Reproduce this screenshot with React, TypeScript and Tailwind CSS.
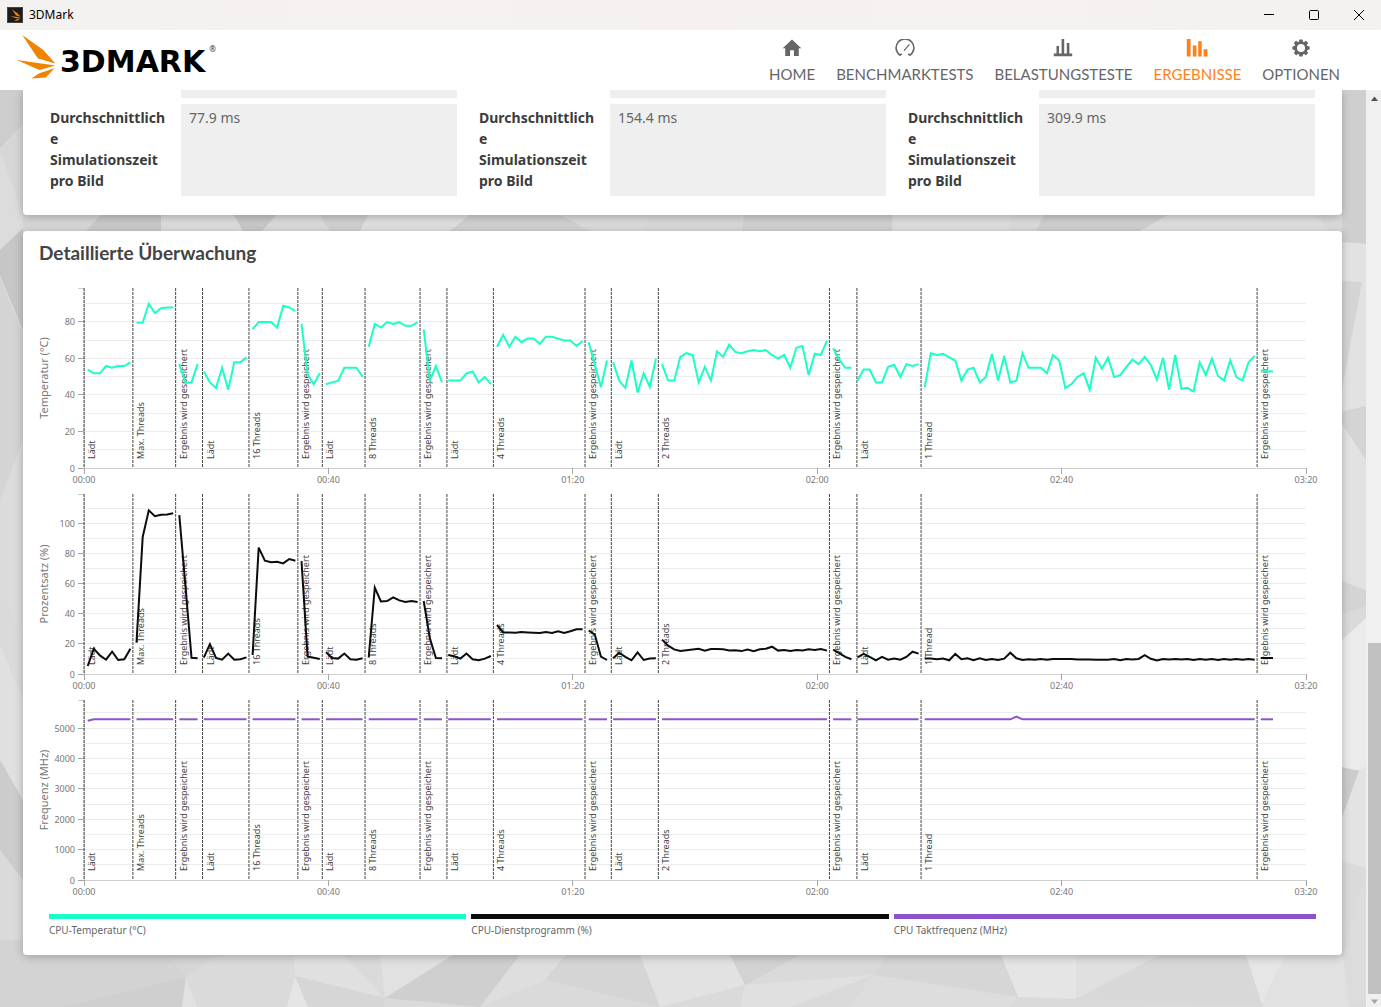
import type { ReactNode } from 'react';
import { clsx } from 'clsx';

type Metric = 'temp' | 'load' | 'clock';

interface Phase {
  label: string;
  start: number;
  // time of the first sample, one sample per second after that
  first: number;
  temp: number[];
  load: number[];
}

interface ChartConfig {
  metric: Metric;
  title: string;
  color: string;
  max: number;
  gridStep: number;
  tickStep: number;
}

const SAVING = 'Ergebnis wird gespeichert';
const LOADING = 'Lädt';

const PHASES: Phase[] = [
  {
    label: LOADING,
    start: 0,
    first: 0.6,
    temp: [54, 52, 52, 56, 55, 56, 56, 58],
    load: [5.5, 17, 12.5, 9.7, 15, 9.5, 10, 17],
  },
  {
    label: 'Max. Threads',
    start: 8,
    first: 8.6,
    temp: [79.6, 79.8, 90, 85, 87.6, 88, 88],
    load: [21, 91, 108.6, 104.8, 105.8, 106, 106.8],
  },
  { label: SAVING, start: 15, first: 15.6, temp: [57, 47, 47, 57], load: [105.5, 59, 11, 10.7] },
  {
    label: LOADING,
    start: 19.4,
    first: 19.6,
    temp: [53, 47, 44, 55, 43, 58, 58, 60.7],
    load: [11, 20, 10.8, 9.7, 13.7, 9.7, 10, 11.2],
  },
  {
    label: '16 Threads',
    start: 27,
    first: 27.6,
    temp: [76.2, 80, 80, 80, 77, 89, 88, 86],
    load: [12.8, 84, 75.3, 74.2, 74.6, 73.5, 76.4, 75.3],
  },
  { label: SAVING, start: 35, first: 35.6, temp: [79, 51.5, 46, 52], load: [75, 11.7, 11, 10.2] },
  {
    label: LOADING,
    start: 39,
    first: 39.6,
    temp: [46, 47, 48, 55, 55, 55, 50],
    load: [14.6, 10.8, 10.4, 13.7, 10, 9.7, 10.6],
  },
  {
    label: '8 Threads',
    start: 46,
    first: 46.6,
    temp: [66.5, 79, 77, 80, 79, 80, 78, 78, 80],
    load: [11.3, 57.4, 48.3, 48.6, 51, 49, 48, 48.6, 48],
  },
  { label: SAVING, start: 55, first: 55.6, temp: [76, 48, 56, 47], load: [48.6, 24, 10.8, 10.6] },
  {
    label: LOADING,
    start: 59.4,
    first: 59.6,
    temp: [48, 48, 48, 52, 53, 47, 50, 46],
    load: [12.8, 12, 10.4, 13.7, 10, 9.3, 10.4, 12.1],
  },
  {
    label: '4 Threads',
    start: 67,
    first: 67.6,
    temp: [66.5, 73, 66.5, 72, 69, 71, 71, 68, 72, 72, 71, 70, 70, 67, 69.6],
    load: [32.7, 27.8, 27.8, 27.6, 28, 27.8, 27.6, 27.4, 28, 27.4, 28.5, 27.4, 28.5, 29.8, 29.8],
  },
  { label: SAVING, start: 82, first: 82.6, temp: [69, 56.5, 44.5, 59], load: [29, 26.3, 11.7, 9.5] },
  {
    label: LOADING,
    start: 86.3,
    first: 86.6,
    temp: [58, 48, 44, 59, 41.5, 52, 44.5, 60],
    load: [10.6, 14.3, 11.5, 9.3, 14.6, 9.5, 10.4, 10.6],
  },
  {
    label: '2 Threads',
    start: 94,
    first: 94.6,
    temp: [
      57, 48, 48, 61, 63, 62, 47, 55.5, 48, 64, 61, 67.7, 63.7, 63, 64, 64.7, 64, 64.7, 62, 60, 62, 55, 66, 67,
      51, 62.7, 62, 69.8,
    ],
    load: [
      23, 19, 16.5, 15.5, 16, 16.5, 17, 15.7, 16.8, 16.8, 16.6, 15.7, 16, 15.4, 16.4, 15.4, 16.6, 17, 18.3,
      15.7, 16.2, 15.4, 16.2, 15.7, 16.6, 16.2, 16.8, 15.7,
    ],
  },
  { label: SAVING, start: 122, first: 122.6, temp: [65.7, 59.5, 55, 55], load: [16.4, 14, 11.5, 10] },
  {
    label: LOADING,
    start: 126.5,
    first: 126.6,
    temp: [48, 54, 54, 47, 47, 55.6, 56.7, 50, 57, 56, 57],
    load: [11.2, 13.5, 11.5, 9.3, 11.5, 9.7, 10.4, 9.7, 11.5, 15, 13.7],
  },
  {
    label: '1 Thread',
    start: 137,
    first: 137.6,
    temp: [
      44.3, 63, 62, 62.7, 60.7, 59, 48, 54, 55, 47, 50, 62.5, 48, 61.5, 47, 48, 63, 55, 55, 55, 52, 62, 59, 44,
      46, 50, 52, 43, 60.5, 54.5, 60.5, 50, 51, 55.5, 59.5, 57, 61, 56.5, 48.5, 60.5, 43, 62, 43.5, 44, 42, 58,
      51, 60, 50.5, 48, 59, 50, 48, 58, 61.5,
    ],
    load: [
      10.5, 10.4, 10, 10.4, 9.3, 13.5, 10, 10.6, 9.3, 10.6, 9.5, 10.2, 9.5, 10.4, 14.3, 10.6, 9.5, 10, 9.7,
      10.2, 9.7, 10.1, 10.2, 10.1, 10.2, 9.9, 9.8, 9.8, 9.7, 9.7, 9.7, 10.1, 9.3, 10.1, 9.9, 10.2, 12.7, 10.3,
      9.2, 10.1, 9.8, 10.1, 9.8, 10.2, 9.4, 10.2, 9.7, 10.1, 9.5, 10.2, 9.6, 10.1, 9.6, 10.1, 9.6,
    ],
  },
  { label: SAVING, start: 192, first: 192.6, temp: [53.5, 53, 53], load: [10.8, 10.8, 10.8] },
];

const CHARTS: ChartConfig[] = [
  { metric: 'temp', title: 'Temperatur (°C)', color: '#19ffc6', max: 98.5, gridStep: 10, tickStep: 20 },
  { metric: 'load', title: 'Prozentsatz (%)', color: '#0c0c0c', max: 119.3, gridStep: 10, tickStep: 20 },
  { metric: 'clock', title: 'Frequenz (MHz)', color: '#8f52cc', max: 5925, gridStep: 500, tickStep: 1000 },
];

const LEGEND = [
  { label: 'CPU-Temperatur (°C)', bar: 'bg-[#19ffc6]' },
  { label: 'CPU-Dienstprogramm (%)', bar: 'bg-[#0c0c0c]' },
  { label: 'CPU Taktfrequenz (MHz)', bar: 'bg-[#8f52cc]' },
];

const RESULTS = ['77.9 ms', '154.4 ms', '309.9 ms'];

// plot area inside each chart's view box
const LEFT = 49;
const TOP = 6;
const PLOT_W = 1222;
const PLOT_H = 180;
const DURATION = 200;

const xAt = (t: number) => LEFT + (t / DURATION) * PLOT_W;

function valuesOf(phase: Phase, index: number, metric: Metric) {
  if (metric !== 'clock') return phase[metric];
  return phase.temp.map((_, i) => {
    if (index === 0 && i === 0) return 5250;
    return phase.label === '1 Thread' && i === 15 ? 5390 : 5300;
  });
}

function formatTime(t: number) {
  return `${String(Math.floor(t / 60)).padStart(2, '0')}:${String(t % 60).padStart(2, '0')}`;
}

function MonitoringChart({ metric, title, color, max, gridStep, tickStep }: ChartConfig) {
  const bottom = TOP + PLOT_H;
  const yAt = (v: number) => bottom - (v / max) * PLOT_H;
  const crisp = (v: number) => Math.floor(yAt(v)) + 0.5;

  const grid: number[] = [];
  for (let v = gridStep; v < max; v += gridStep) grid.push(v);
  const ticks: number[] = [];
  for (let v = 0; v < max; v += tickStep) ticks.push(v);

  return (
    <svg viewBox="0 0 1295 206" className="block h-auto w-full" role="img" aria-label={title}>
      {grid.map((v) => (
        <line key={v} x1={LEFT} x2={LEFT + PLOT_W} y1={crisp(v)} y2={crisp(v)} stroke="#ededed" />
      ))}

      {/* Axes */}
      <path
        d={`M${LEFT - 6} ${TOP + 0.5}H${LEFT + 0.5}V${bottom + 0.5}H${LEFT + PLOT_W + 1}`}
        fill="none"
        stroke="#cfcfcf"
      />
      {ticks.map((v) => (
        <g key={v}>
          <line x1={LEFT - 6} x2={LEFT} y1={crisp(v)} y2={crisp(v)} stroke="#a5a5a5" />
          <text x={LEFT - 9} y={crisp(v) + 3} textAnchor="end" className="fill-[#777] text-[9px]">
            {v}
          </text>
        </g>
      ))}
      {[0, 40, 80, 120, 160, 200].map((t) => (
        <g key={t}>
          <line
            x1={Math.floor(xAt(t)) + 0.5}
            x2={Math.floor(xAt(t)) + 0.5}
            y1={bottom}
            y2={bottom + 6}
            stroke="#a5a5a5"
          />
          <text x={xAt(t)} y={bottom + 15} textAnchor="middle" className="fill-[#777] text-[9px]">
            {formatTime(t)}
          </text>
        </g>
      ))}
      <text
        transform={`translate(${LEFT - 36} ${TOP + PLOT_H / 2}) rotate(-90)`}
        textAnchor="middle"
        className="fill-[#777] text-[11px]"
      >
        {title}
      </text>

      {/* Phase markers */}
      {PHASES.map((p) => (
        <g key={p.start}>
          <line
            x1={xAt(p.start)}
            x2={xAt(p.start)}
            y1={TOP}
            y2={bottom}
            stroke="#444"
            strokeDasharray="3 1"
          />
          <text
            transform={`translate(${xAt(p.start) + 11} ${bottom - 9}) rotate(-90)`}
            className="fill-[#444] text-[9px]"
          >
            {p.label}
          </text>
        </g>
      ))}

      {PHASES.map((p, index) => (
        <polyline
          key={p.start}
          points={valuesOf(p, index, metric)
            .map((v, i) => `${xAt(p.first + i).toFixed(1)},${(yAt(v) + 0.3).toFixed(1)}`)
            .join(' ')}
          fill="none"
          stroke={color}
          strokeWidth="2"
        />
      ))}
    </svg>
  );
}

function HomeIcon() {
  return (
    <svg viewBox="0 0 20 18" className="h-[18px] w-5" fill="currentColor">
      <path d="M10 .5 19.3 9.3H16.8V17H11.9V11.2H8.1V17H3.2V9.3H.7z" />
    </svg>
  );
}

function GaugeIcon() {
  return (
    <svg viewBox="0 0 20 18" className="h-[18px] w-5" fill="none" stroke="currentColor">
      <path d="M6.8 14.8 5 16.2A8.9 8.9 0 1 1 15 16.2L13.2 14.8" strokeWidth="1.6" />
      <path d="M9 11.6 14.4 5.4" strokeWidth="1.3" />
    </svg>
  );
}

function StressIcon() {
  return (
    <svg viewBox="0 0 20 18" className="h-[18px] w-5" fill="currentColor">
      <path d="M.8 14.4H19.2V17.2H.8zM3.5 7H6V14.4H3.5zM8.6 0H11.2V14.4H8.6zM13.8 4H16.4V14.4H13.8z" />
    </svg>
  );
}

function ResultsIcon() {
  return (
    <svg viewBox="0 0 22 18" className="h-[18px] w-[22px]" fill="currentColor">
      <path d="M.8 0H4.6V17.4H.8zM6.8 6.4H10.4V17.4H6.8zM12.2 2.3H15.7V17.4H12.2zM17.6 10.2H21.4V17.4H17.6z" />
    </svg>
  );
}

function GearIcon() {
  return (
    <svg viewBox="-9 -9 18 18" className="size-[18px]">
      <g fill="currentColor">
        {[0, 45, 90, 135, 180, 225, 270, 315].map((a) => (
          <path key={a} d="M-2.2-5.5-1.5-8.6H1.5L2.2-5.5z" transform={`rotate(${a})`} />
        ))}
      </g>
      <circle r="5.3" fill="none" stroke="currentColor" strokeWidth="2.6" />
    </svg>
  );
}

const NAV: { label: string; icon: ReactNode; active?: boolean }[] = [
  { label: 'HOME', icon: <HomeIcon /> },
  { label: 'BENCHMARKTESTS', icon: <GaugeIcon /> },
  { label: 'BELASTUNGSTESTE', icon: <StressIcon /> },
  { label: 'ERGEBNISSE', icon: <ResultsIcon />, active: true },
  { label: 'OPTIONEN', icon: <GearIcon /> },
];

function LogoMark({ className }: { className: string }) {
  return (
    <svg viewBox="0 0 40 45" className={className} fill="#f08300">
      <path d="M6.2 1 27.3 16 39.3 29.4 22 24.4z" />
      <path d="M.6 26 39.3 31.6 23.6 36z" />
      <path d="M38.6 34.2 29.8 43.4 15.3 44.6 23.4 39.2z" />
    </svg>
  );
}

function TitleBar() {
  return (
    <div className="flex h-[30px] shrink-0 items-center bg-linear-to-r from-[#f3f2f0] via-[#f6f1f0] to-[#f3f2f0] pl-[7px]">
      <span className="flex size-4 items-center justify-center border border-[#444] bg-[#1c1c1c]">
        <LogoMark className="h-3 w-[11px]" />
      </span>
      <span className="ml-1.5 text-xs text-black">3DMark</span>
      <div className="ml-auto flex h-full text-black">
        <button aria-label="Minimieren" className="flex w-[45px] items-center justify-center">
          <svg viewBox="0 0 10 10" className="size-2.5" stroke="currentColor">
            <path d="M0 4.5H10" />
          </svg>
        </button>
        <button aria-label="Maximieren" className="flex w-[46px] items-center justify-center">
          <svg viewBox="0 0 10 10" className="size-2.5" stroke="currentColor" fill="none">
            <rect x=".5" y=".5" width="9" height="9" rx="1" />
          </svg>
        </button>
        <button aria-label="Schließen" className="flex w-11 items-center justify-center">
          <svg viewBox="0 0 10 10" className="size-2.5" stroke="currentColor">
            <path d="M0 0 10 10M10 0 0 10" />
          </svg>
        </button>
      </div>
    </div>
  );
}

function Header() {
  return (
    <header className="flex h-[60px] shrink-0 items-start justify-between bg-white pt-1 pr-[41px] pl-4">
      <a href="#home" className="flex items-start gap-1 text-black" aria-label="3DMark">
        <LogoMark className="h-[45px] w-10" />
        <span className="mt-2.5 font-['DejaVu_Sans'] text-[30px] leading-9 font-bold">3DMARK</span>
        <span className="mt-2.5 text-[8px] leading-[10px] text-[#333]">®</span>
      </a>
      <nav className="flex gap-[21px] pt-[5px] font-[Lato] text-[15px]">
        {NAV.map((item) => (
          <a
            key={item.label}
            href="#"
            className={clsx(
              'flex flex-col items-center gap-[7px] leading-5',
              item.active ? 'text-[#ff7f1a]' : 'text-[#666]'
            )}
          >
            {item.icon}
            {item.label}
          </a>
        ))}
      </nav>
    </header>
  );
}

function Backdrop() {
  return (
    <svg
      viewBox="0 90 1366 917"
      preserveAspectRatio="none"
      className="absolute inset-0 h-full w-full"
      aria-hidden="true"
    >
      <path d="M0 90H1366V1007H0z" fill="#dadada" />
      {/* left edge */}
      <path d="M0 90H23V215L0 230z" fill="#cdcdcd" />
      <path d="M23 124V240L0 236V148z" fill="#d6d6d6" />
      <path d="M0 150 23 215V300L0 252z" fill="#dcdcdc" />
      <path d="M0 250 23 228V330L0 275z" fill="#c6c6c6" />
      <path d="M0 278 23 335V445L0 500z" fill="#d4d4d4" />
      <path d="M0 500 23 440V640L0 590z" fill="#dbdbdb" />
      <path d="M0 645 23 700V830L0 760z" fill="#e0e0e0" />
      <path d="M0 760 23 800V880L0 850z" fill="#cccccc" />
      {/* band between the cards */}
      <path d="M23 205H82L101 215 86 231H23z" fill="#d6d6d6" />
      <path d="M101 215H161V231H86z" fill="#c9c9c9" />
      <path d="M161 215H234L243 231H161z" fill="#dcdcdc" />
      <path d="M234 215H276L262 231H243z" fill="#c8c8c8" />
      <path d="M320 215H368L360 231H330z" fill="#d0d0d0" />
      <path d="M368 215H470L450 231H360z" fill="#dfdfdf" />
      <path d="M470 215H560L590 231H450z" fill="#d0d0d0" />
      <path d="M650 215H740L744 231H640z" fill="#d8d8d8" />
      <path d="M744 215H893L892 231H742z" fill="#d0d0d0" />
      <path d="M893 215H1012L1009 231H892z" fill="#dddddd" />
      <path d="M1044 215H1168L1140 231H1036z" fill="#cfcfcf" />
      <path d="M1168 215H1315L1330 231H1140z" fill="#dfdfdf" />
      {/* right edge */}
      <path d="M1342 90H1366V244L1342 242z" fill="#cfcfcf" />
      <path d="M1342 242 1366 244V282H1342z" fill="#e2e2e2" />
      <path d="M1342 281 1362 282 1342 390z" fill="#d4d4d4" />
      <path d="M1362 282H1366V406L1342 412V390z" fill="#e2e2e2" />
      <path d="M1342 412 1366 406V460L1342 424z" fill="#d4d4d4" />
      <path d="M1342 424 1366 460V590L1342 581z" fill="#e2e2e2" />
      <path d="M1342 581 1366 591V606L1342 614z" fill="#d4d4d4" />
      <path d="M1342 640 1366 618V770H1342z" fill="#ebebeb" />
      <path d="M1342 767 1359 771 1342 818z" fill="#cccccc" />
      <path d="M1359 771 1366 766V868L1342 861V818z" fill="#e3e3e3" />
      {/* bottom strip */}
      <path d="M0 940H168L186 977 60 1007H0z" fill="#d3d3d3" />
      <path d="M186 977 60 1007H182z" fill="#cfcfcf" />
      <path d="M168 955H220L186 977z" fill="#d6d6d6" />
      <path d="M186 977 182 1007H197z" fill="#e1e1e1" />
      <path d="M186 977 220 955H294L295 976z" fill="#dadada" />
      <path d="M294 955H343L385 998 295 976z" fill="#e0e0e0" />
      <path d="M343 955H380L385 998z" fill="#dadada" />
      <path d="M380 955H453L385 998z" fill="#e1e1e1" />
      <path d="M295 976 287 1007H308z" fill="#e5e5e5" />
      <path d="M295 976 385 998 384 1007H308z" fill="#d6d6d6" />
      <path d="M453 955H520L480 1007 385 998z" fill="#cfcfcf" />
      <path d="M520 955H566L545 980 480 1007z" fill="#dedede" />
      <path d="M566 955H640L660 1007 545 980z" fill="#d5d5d5" />
      <path d="M640 955H730L745 985 660 1007z" fill="#e2e2e2" />
      <path d="M730 955H800L745 985z" fill="#d2d2d2" />
      <path d="M745 985 873 975 790 1007H740z" fill="#e0e0e0" />
      <path d="M873 975 888 955H1001L1018 997z" fill="#d6d6d6" />
      <path d="M873 975 1018 997 1010 1007H850z" fill="#dddddd" />
      <path d="M1001 955H1076V999L1018 997z" fill="#e5e5e5" />
      <path d="M1076 955H1160L1076 999z" fill="#e0e0e0" />
      <path d="M1160 955H1246L1262 1005 1076 999z" fill="#d8d8d8" />
      <path d="M1246 955H1285L1262 1005z" fill="#e6e6e6" />
      <path d="M1285 955H1343L1349 1007H1262z" fill="#e1e1e1" />
      <path d="M1343 955 1366 868V1000L1349 1007z" fill="#dcdcdc" />
    </svg>
  );
}

function ResultsCard() {
  return (
    <section className="rounded-b bg-white px-[27px] pb-[19px] shadow-[0_2px_8px_rgba(0,0,0,0.25)]">
      <dl className="grid grid-cols-3 gap-x-[22px]">
        {RESULTS.map((value) => (
          <div key={value} className="grid grid-cols-[117px_1fr] gap-x-3.5 gap-y-1.5 text-sm leading-[21px]">
            <div className="col-start-2 h-2 bg-[#efefef]" />
            <dt className="col-start-1 pt-[3px] pb-[5px] font-bold wrap-anywhere text-[#3c3c3c]">
              Durchschnittliche Simulationszeit pro Bild
            </dt>
            <dd className="bg-[#efefef] px-2 pt-[3px] pb-[5px] text-[#666]">{value}</dd>
          </div>
        ))}
      </dl>
    </section>
  );
}

function MonitoringCard() {
  return (
    <section className="rounded bg-white px-3 pt-2.5 pb-[18px] shadow-[0_2px_8px_rgba(0,0,0,0.25)]">
      <h2 className="px-1 font-[Lato] text-[19px] leading-6 font-bold text-[#444]">Detaillierte Überwachung</h2>
      <div className="mt-[17px]">
        {CHARTS.map((chart) => (
          <MonitoringChart key={chart.metric} {...chart} />
        ))}
      </div>
      <ul className="mt-3.5 grid grid-cols-3 px-3.5">
        {LEGEND.map((item) => (
          <li key={item.label} className="pr-[5px] text-[10px] leading-[14px] text-[#666] last:pr-0">
            <div className={clsx('mb-1 h-[5px]', item.bar)} />
            {item.label}
          </li>
        ))}
      </ul>
    </section>
  );
}

function Scrollbar() {
  return (
    <div className="flex w-[15px] shrink-0 flex-col items-end bg-[#f0f0f0]">
      <svg viewBox="0 0 13 17" className="h-[17px] w-[13px] shrink-0" fill="#505050">
        <path d="M6.5 6.5 10 11H3z" />
      </svg>
      <div className="grow-[536]" />
      <div className="w-[13px] grow-[351] bg-[#c1c1c1]" />
      <svg viewBox="0 0 13 13" className="size-[13px] shrink-0" fill="#a3a3a3">
        <path d="M3 5.5H10L6.5 10z" />
      </svg>
    </div>
  );
}

export default function App() {
  return (
    <div className="flex h-screen flex-col overflow-hidden font-['Noto_Sans',sans-serif]">
      <TitleBar />
      <Header />
      <div className="flex min-h-0 flex-1">
        <main className="relative min-w-0 flex-1 overflow-hidden bg-[#dadada]">
          <Backdrop />
          <div className="relative flex flex-col gap-4 pr-6 pl-[23px]">
            <ResultsCard />
            <MonitoringCard />
          </div>
        </main>
        <Scrollbar />
      </div>
    </div>
  );
}
